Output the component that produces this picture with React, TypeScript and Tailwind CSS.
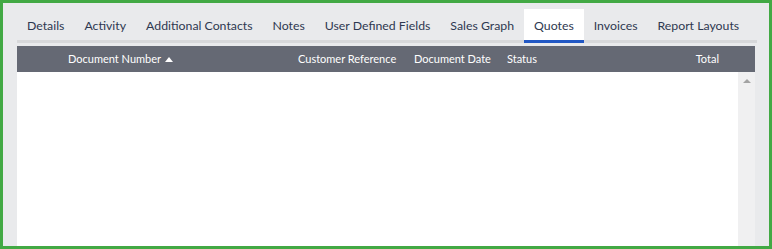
import React from "react";

const tabs = [
  "Details",
  "Activity",
  "Additional Contacts",
  "Notes",
  "User Defined Fields",
  "Sales Graph",
  "Quotes",
  "Invoices",
  "Report Layouts",
];

export default function App() {
  return (
    <div
      className="w-[772px] h-[249px] border-[3px] border-[#42a944] bg-[#e9eaec] overflow-hidden flex flex-col pl-[14px] pr-[14px] pt-[6px]"
      style={{ fontFamily: "Lato, 'Noto Sans', sans-serif" }}
    >
      <div className="flex h-[34px] border-b-[3px] border-[#d7d8da] -mr-[2px] shrink-0">
        {tabs.map((t) => {
          const active = t === "Quotes";
          return (
            <div
              key={t}
              className={
                "h-[34px] -mb-[3px] px-[10px] pt-[4px] shrink-0 whitespace-nowrap flex items-center text-[12.3px] text-[#2e3850] border-b-[3px] " +
                (active ? "bg-white border-[#2258c4]" : "border-transparent")
              }
            >
              <span>{t}</span>
            </div>
          );
        })}
      </div>
      <div className="mt-[3px] h-[26px] shrink-0 bg-[#656974] text-white text-[11px] whitespace-nowrap flex items-center pl-[51px] pr-[36px]">
        <div className="w-[230px] shrink-0 flex items-center gap-[4px]">
          <span>Document Number</span>
          <svg width="8" height="5" viewBox="0 0 8 5">
            <polygon points="0,5 8,5 4,0" fill="#ffffff" />
          </svg>
        </div>
        <div className="w-[116px] shrink-0">Customer Reference</div>
        <div className="w-[93px] shrink-0">Document Date</div>
        <div className="flex-1">Status</div>
        <div>Total</div>
      </div>
      <div className="flex flex-1 min-h-0">
        <div className="flex-1 bg-white" />
        <div className="w-[17px] bg-[#f0f0f1] flex justify-center pt-[7px]">
          <svg width="8" height="4" viewBox="0 0 8 4">
            <polygon points="0,4 8,4 4,0" fill="#a3a3a3" />
          </svg>
        </div>
      </div>
    </div>
  );
}
